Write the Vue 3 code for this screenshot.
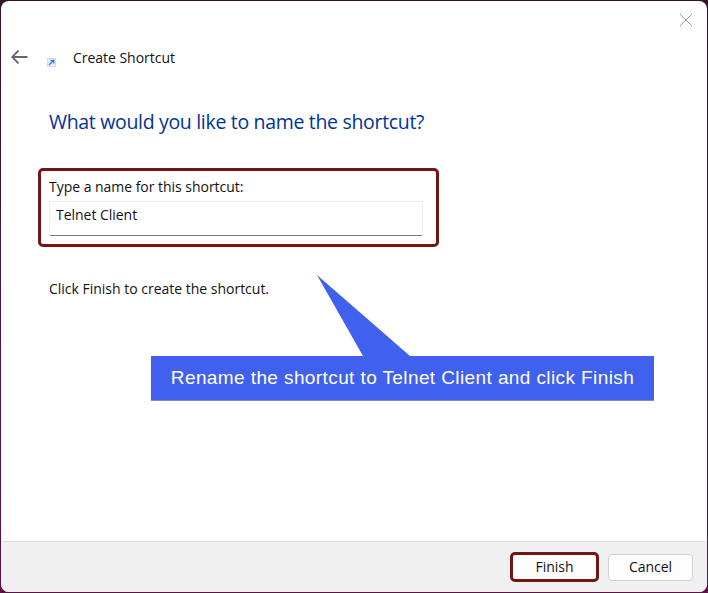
<script setup>
const title = 'Create Shortcut'
</script>

<template>
  <div class="desktop">
    <div class="window">
      <main class="content">
        <button class="close" aria-label="Close">
          <svg width="14" height="14" viewBox="0 0 14 14"><path d="M1 1L13 13M13 1L1 13" stroke="#9a9a9a" stroke-width="1" fill="none" /></svg>
        </button>
        <header class="head">
          <svg class="back" width="17" height="14" viewBox="0 0 17 14"><path d="M7.5 0.6L1.2 7L7.5 13.4M1.2 7H16.5" stroke="#666" stroke-width="1.8" fill="none" /></svg>
          <svg class="sc" width="9" height="9" viewBox="0 0 9 9"><rect x="0.5" y="0.5" width="8" height="8" fill="#eaf3fb" stroke="#cfdbe6" stroke-width="1" /><path d="M2 7L6.5 2.5M3.5 2.3H6.8V5.6" stroke="#1f7fd6" stroke-width="1.2" fill="none" /></svg>
          <span class="title">{{ title }}</span>
        </header>
        <h1>What would you like to name the shortcut?</h1>
        <section class="field">
          <label>Type a name for this shortcut:</label>
          <div class="input">Telnet Client</div>
        </section>
        <p class="hint">Click Finish to create the shortcut.</p>
        <div class="callout">
          <svg class="tip" width="95" height="81" viewBox="0 0 95 81"><path d="M2 0L48 81H95Z" fill="#4060ee" /></svg>
          <div class="msg">Rename the shortcut to Telnet Client and click Finish</div>
        </div>
      </main>
      <footer class="foot">
        <button class="btn primary">Finish</button>
        <button class="btn">Cancel</button>
      </footer>
    </div>
  </div>
</template>

<style>
html, body { margin: 0; padding: 0; background: #4a1240; }
</style>

<style scoped>
.desktop {
  width: 708px;
  height: 593px;
  box-sizing: border-box;
  padding: 1px;
  background: linear-gradient(#33142b, #4a1446 50%, #5c1048);
  font-family: "Open Sans", "Noto Sans", sans-serif;
  color: #111;
}
.window {
  width: 706px;
  height: 591px;
  background: #fff;
  border-radius: 8px;
  overflow: hidden;
  display: flex;
  flex-direction: column;
}
.content {
  position: relative;
  flex: 1;
  padding: 36px 0 0 48px;
}
.close {
  position: absolute;
  top: 12px;
  right: 14px;
  width: 14px;
  height: 14px;
  padding: 0;
  border: 0;
  background: none;
  display: flex;
}
.head {
  display: flex;
  align-items: center;
  height: 40px;
  margin-left: -38px;
}
.sc { margin: 10px 0 0 19px; }
.title { margin-left: 17px; font-size: 14px; letter-spacing: -0.03px; margin-top: 1px; }
h1 {
  margin: 29px 0 0;
  font-size: 19.5px;
  line-height: 32px;
  font-weight: 400;
  color: #003399;
  letter-spacing: -0.32px;
}
.field {
  width: 401px;
  height: 79px;
  margin: 30px 0 0 -11px;
  padding: 7px 0 0 8px;
  box-sizing: border-box;
  border: 3px solid #731515;
  border-radius: 5px;
}
label { display: block; font-size: 14px; line-height: 18px; letter-spacing: -0.03px; }
.input {
  width: 374px;
  height: 35px;
  margin-top: 5px;
  padding: 3px 0 0 6px;
  box-sizing: border-box;
  background: #fff;
  border: 1px solid #ececec;
  border-bottom: 1px solid #7a7a7a;
  border-radius: 2px;
  font-size: 14px;
  line-height: 20px;
  letter-spacing: -0.03px;
}
.hint {
  margin: 33px 0 0;
  font-size: 14px;
  line-height: 18px;
  letter-spacing: -0.01px;
}
.callout {
  position: absolute;
  left: 150px;
  top: 355px;
  width: 503px;
}
.tip {
  position: absolute;
  left: 164px;
  top: -81px;
}
.msg {
  height: 45px;
  background: #4060ee;
  border-bottom: 1px solid #8a8a9a;
  box-sizing: border-box;
  color: #fff;
  font-family: "Liberation Sans", Arial, sans-serif;
  font-size: 19px;
  line-height: 43px;
  text-align: center;
  letter-spacing: 0.4px;
  white-space: nowrap;
}
.foot {
  height: 51px;
  box-sizing: border-box;
  border-top: 1px solid #dfdfdf;
  background: #f0f0f0;
  display: flex;
  justify-content: flex-end;
  align-items: center;
  gap: 9px;
  padding: 0 14px 0 0;
}
.btn {
  width: 85px;
  height: 27px;
  box-sizing: border-box;
  background: #fdfdfd;
  border: 1px solid #d2d2d2;
  border-radius: 4px;
  font-family: inherit;
  font-size: 14px;
  letter-spacing: -0.03px;
  color: #111;
  padding: 0 0 2px;
}
.primary {
  width: 89px;
  height: 30px;
  border: 3px solid #731515;
  border-radius: 5px;
}
</style>
